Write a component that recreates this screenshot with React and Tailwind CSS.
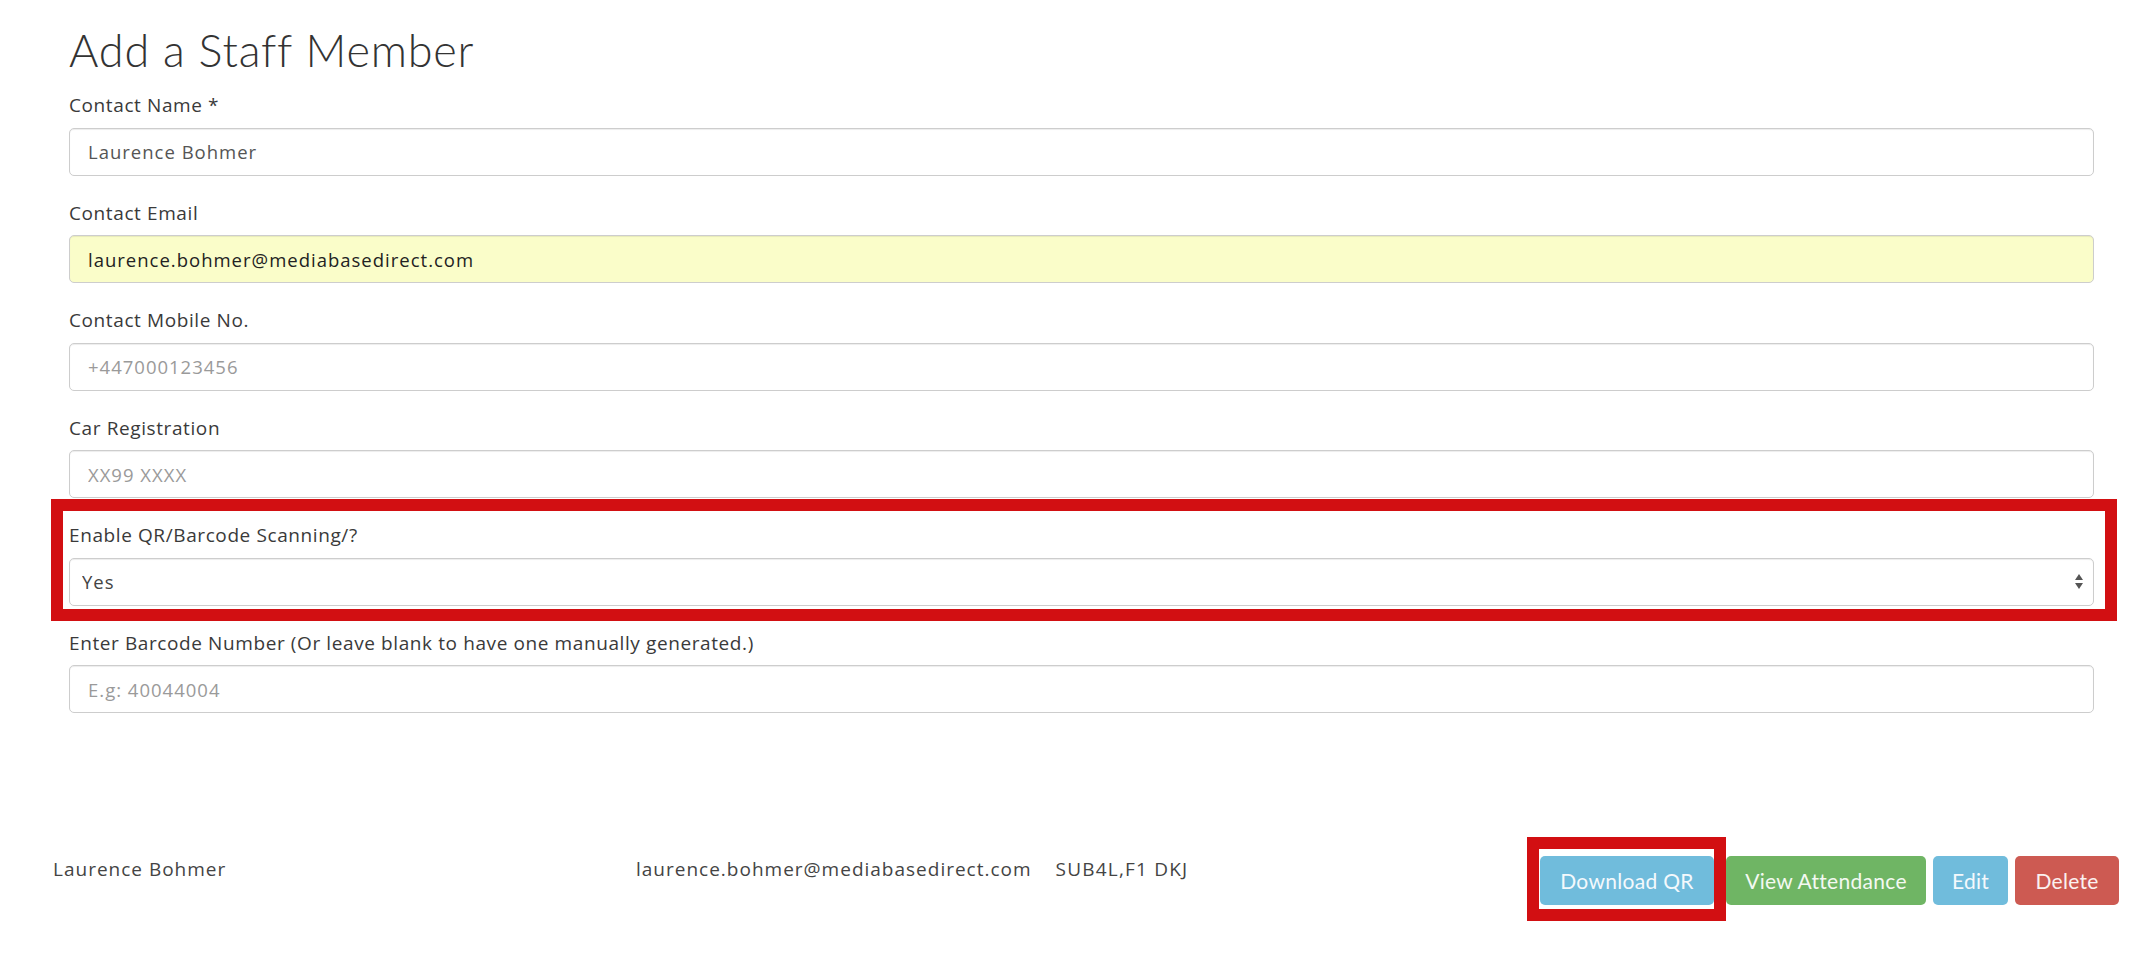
import React from "react";

function Field({ label, value, placeholder, autofill }) {
  return (
    <div className="mb-[23px]">
      <label className="block text-[19px] leading-[28px] tracking-[0.6px] mb-[8.5px] text-[#3a3a3a]">{label}</label>
      <input
        readOnly
        defaultValue={value}
        placeholder={placeholder}
        className={
          "block w-full h-[48px] rounded-[5px] border border-[#cdcdcd] px-[18px] text-[18.5px] tracking-[1px] outline-none shadow-[inset_0_1px_1px_rgba(0,0,0,0.075)] placeholder:text-[#9a9a9a] " +
          (autofill ? "bg-[#fafdc9] text-[#222]" : "bg-white text-[#555]")
        }
      />
    </div>
  );
}

export default function App() {
  return (
    <div className="min-h-screen bg-white font-['Open_Sans',sans-serif] text-[#333]">
      <h1 className="ml-[69px] pt-[25px] font-[Lato,sans-serif] text-[45px] font-light leading-[50px] tracking-[0.8px] text-[#333]">
        Add a Staff Member
      </h1>
      <div className="mt-[16px] pl-[69px] pr-[52px]">
        <Field label="Contact Name *" value="Laurence Bohmer" />
        <Field label="Contact Email" value="laurence.bohmer@mediabasedirect.com" autofill />
        <Field label="Contact Mobile No." placeholder="+447000123456" />
        <Field label="Car Registration" placeholder="XX99 XXXX" />
        <div className="relative mb-[23px]">
          <label className="block text-[19px] leading-[28px] tracking-[0.6px] mb-[8.5px] text-[#3a3a3a]">
            Enable QR/Barcode Scanning/?
          </label>
          <div className="relative">
            <select
              defaultValue="Yes"
              className="block w-full h-[48px] appearance-none rounded-[5px] border border-[#cdcdcd] bg-white px-[12px] text-[18.5px] tracking-[1px] text-[#444] outline-none shadow-[inset_0_1px_1px_rgba(0,0,0,0.075)]"
            >
              <option>Yes</option>
              <option>No</option>
            </select>
            <svg
              className="pointer-events-none absolute right-[10px] top-[15px]"
              width="10"
              height="17"
              viewBox="0 0 10 17"
            >
              <path d="M5 1 L9 7 L1 7 Z" fill="#555" />
              <path d="M1 10 L9 10 L5 16 Z" fill="#555" />
            </svg>
          </div>
          <div className="pointer-events-none absolute left-[-18px] right-[-23px] top-[-22px] bottom-[-15px] border-[12px] border-[#d20f12]" />
        </div>
        <Field
          label="Enter Barcode Number (Or leave blank to have one manually generated.)"
          placeholder="E.g: 40044004"
        />
      </div>

      <div className="mt-[143px] flex items-start pl-[53px] pr-[27px]">
        <span className="-mt-[1px] w-[583px] text-[19px] leading-[28px] tracking-[1px] text-[#444]">Laurence Bohmer</span>
        <span className="-mt-[1px] text-[19px] leading-[28px] tracking-[1px] text-[#444]">laurence.bohmer@mediabasedirect.com</span>
        <span className="-mt-[1px] ml-[24px] text-[19px] leading-[28px] tracking-[1.2px] text-[#444]">SUB4L,F1 DKJ</span>
        <div className="ml-auto flex items-start">
          <div className="relative">
            <button className="h-[49px] w-[174px] rounded-[5px] bg-[#70bcdc] font-[Lato,sans-serif] text-[21px] leading-[49px] tracking-[0.3px] text-[#f4f9fc]">
              Download QR
            </button>
            <div className="pointer-events-none absolute left-[-13px] right-[-12px] top-[-19px] bottom-[-16px] border-[12px] border-[#d20f12]" />
          </div>
          <button className="ml-[12px] h-[49px] w-[200px] rounded-[5px] bg-[#6fb564] font-[Lato,sans-serif] text-[21px] leading-[49px] tracking-[0.3px] text-[#f4f9f2]">
            View Attendance
          </button>
          <button className="ml-[7px] h-[49px] w-[75px] rounded-[5px] bg-[#70bcdc] font-[Lato,sans-serif] text-[21px] leading-[49px] tracking-[0.3px] text-[#f4f9fc]">
            Edit
          </button>
          <button className="ml-[7px] h-[49px] w-[104px] rounded-[5px] bg-[#cd5a52] font-[Lato,sans-serif] text-[21px] leading-[49px] tracking-[0.3px] text-[#fbf1f0]">
            Delete
          </button>
        </div>
      </div>
    </div>
  );
}
